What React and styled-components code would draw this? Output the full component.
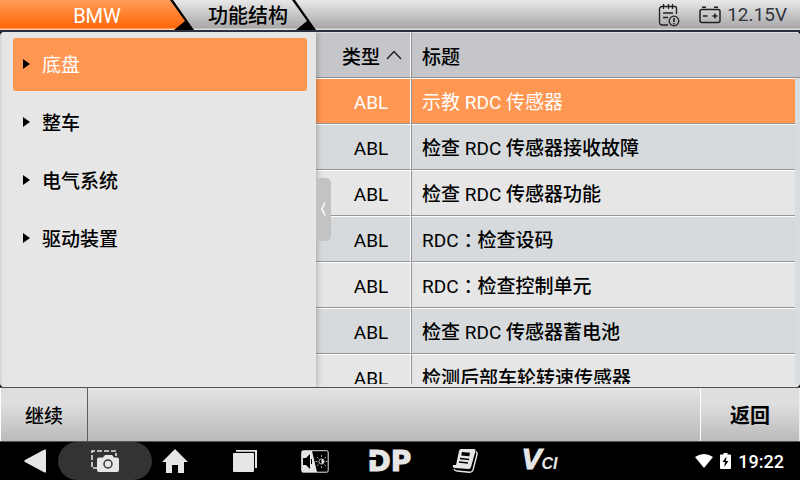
import React, { useState } from 'react';
import styled, { createGlobalStyle } from 'styled-components';

const GlobalStyle = createGlobalStyle`
    * {
        box-sizing: border-box;
    }
    body {
        margin: 0;
        background: #000;
        font-family: Roboto, 'Noto Sans CJK SC', sans-serif;
        font-size: 19px;
        color: #000;
    }
    button {
        border: none;
        padding: 0;
        background: none;
        font: inherit;
        color: inherit;
        cursor: pointer;
    }
`;

const Page = styled.div`
    height: 100vh;
    display: flex;
    flex-direction: column;
    overflow: hidden;
`;

const TopBar = styled.header`
    height: 32px;
    flex-shrink: 0;
    display: flex;
    background: linear-gradient(#e8e8e8, #a8a8a8 28px, #dcdcdc 29px, #dcdcdc 30px, #292e43 30px);
    border-bottom: 2px solid #292e43;
`;

const Tabs = styled.nav`
    display: flex;
`;

const Tab = styled.button`
    position: relative;
    z-index: 0;
    width: ${(props) => (props.$active ? '194px' : '122px')};
    padding-right: ${(props) => (props.$active ? '0' : '14px')};
    height: 30px;
    font-size: 20px;
    line-height: 32px;
    font-weight: ${(props) => (props.$active ? 400 : 500)};
    color: ${(props) => (props.$active ? '#fff' : '#000')};

    &::before,
    &::after {
        content: '';
        position: absolute;
        inset: 0;
        z-index: -1;
    }

    &::before {
        background: ${(props) => (props.$active ? 'linear-gradient(#ff9b58, #ff6808 28px, #ffc8a0 29px)' : 'none')};
        clip-path: polygon(0 0, calc(100% - 24px) 0, calc(100% - 8px) 21px, calc(100% - 19px) 100%, 0 100%);
    }

    &::after {
        background: #000;
        clip-path: polygon(calc(100% - 24px) 0, calc(100% - 21px) 0, 100% 100%, calc(100% - 20px) 100%, calc(100% - 9px) 21px);
    }
`;

const Status = styled.div`
    margin-left: auto;
    padding-right: 13px;
    display: flex;
    align-items: center;
    color: #32343f;
    line-height: 30px;

    svg {
        margin-right: 19px;
    }
    svg + svg {
        margin-right: 6px;
    }
`;

const Content = styled.main`
    flex: 1;
    min-height: 0;
    display: flex;
    background: #e6e6e6;
    border-left: 2px solid #d5dade;
    border-radius: 4px;
    overflow: hidden;
`;

const Side = styled.aside`
    width: 314px;
    flex-shrink: 0;
    padding: 6px 9px 0 11px;
    position: relative;
    z-index: 1;
    background: #e6e6e6;
    box-shadow: 1px 0 6px rgba(0, 0, 0, 0.25);
`;

const Tree = styled.ul`
    margin: 0;
    padding: 0;
    list-style: none;
    display: flex;
    flex-direction: column;
    gap: 5px;
`;

const TreeItem = styled.button`
    width: 100%;
    height: 53px;
    padding: 0 0 2px 10px;
    display: flex;
    align-items: center;
    gap: 12px;
    border-radius: 3px;
    font-weight: ${(props) => (props.$selected ? 400 : 500)};
    background: ${(props) => (props.$selected ? '#ff9752' : 'transparent')};
    color: ${(props) => (props.$selected ? '#fff' : '#000')};
`;

const Handle = styled.button`
    position: absolute;
    left: 100%;
    top: calc(50% - 32px);
    width: 15px;
    height: 63px;
    display: flex;
    align-items: center;
    justify-content: center;
    background: #c3c3c3;
    border-radius: 0 5px 5px 0;
`;

const TableBox = styled.div`
    flex: 1;
    min-width: 0;
    margin-bottom: 3px;
    overflow: hidden;
`;

const Table = styled.table`
    width: 100%;
    table-layout: fixed;
    border-collapse: separate;
    border-spacing: 0;
`;

const TypeCol = styled.col`
    width: 95px;
`;

const GutterCol = styled.col`
    width: 5px;
`;

const Th = styled.th`
    height: 46px;
    padding: ${(props) => (props.$type ? '0 8px 0 0' : '0 0 0 10px')};
    text-align: ${(props) => (props.$type ? 'right' : 'left')};
    font-weight: 500;
    background: #c5c6ca;
    border-top: 1px solid #dedede;
    border-bottom: 1px solid #8f8f91;
    border-right: ${(props) => (props.$type ? '1px solid #fff' : 'none')};
    border-left: ${(props) => (props.$type ? 'none' : '1px solid #909092')};
`;

const SortButton = styled.button`
    display: inline-flex;
    align-items: center;
    gap: 6px;
    vertical-align: middle;
`;

const Row = styled.tr`
    background: ${(props) => props.$color};
    color: ${(props) => (props.$selected ? '#fff' : '#000')};
    cursor: pointer;
`;

const Td = styled.td`
    height: 46px;
    padding: ${(props) => (props.$type ? '4px 0 0 16px' : '4px 0 0 10px')};
    text-align: ${(props) => (props.$type ? 'center' : 'left')};
    font-weight: ${(props) => (props.$selected || props.$type ? 400 : 500)};
    line-height: 22px;
    white-space: nowrap;
    border-top: 1px solid #fff;
    border-bottom: 1px solid #959698;
    border-right: ${(props) => (props.$type ? '1px solid #fff' : 'none')};
    border-left: ${(props) => (props.$type ? 'none' : '1px solid #909092')};
`;

const Latin = styled.span`
    font-weight: 400;
`;

const Colon = styled.span`
    display: inline-block;
    width: 19px;
    text-indent: 5px;
`;

const Gutter = styled.td`
    padding: 0;
    background: #d9dcdf;
`;

const Footer = styled.footer`
    height: 55px;
    flex-shrink: 0;
    display: flex;
    justify-content: space-between;
    background: linear-gradient(#e4e4e4, #b9b9b9);
    border-top: 1px solid #555;
    border-bottom: 1px solid #555;
`;

const FooterButton = styled.button`
    width: ${(props) => (props.$primary ? '100px' : '88px')};
    font-size: ${(props) => (props.$primary ? '20px' : '19px')};
    font-weight: ${(props) => (props.$primary ? 700 : 500)};
    background: linear-gradient(#dedede 30%, #bababa);
    border-left: 1px solid #fff;
    border-right: 1px solid ${(props) => (props.$primary ? '#eee' : '#5c5c5c')};
`;

const SystemBar = styled.nav`
    height: 38px;
    flex-shrink: 0;
    display: flex;
    align-items: center;
    background: #000;
    color: #e6e6e6;
`;

const NavButton = styled.button`
    position: relative;
    width: 70px;
    height: 38px;
    display: flex;
    align-items: center;
    justify-content: center;
`;

const Tools = styled.div`
    display: flex;
    margin-left: 2px;
`;

const ToolButton = styled(NavButton)`
    width: 75px;
`;

const CaptureButton = styled(NavButton)`
    width: 94px;
    margin: 0 -12px;
    background: #333;
    border-radius: 19px;
`;

const DpLogo = styled.span`
    font-family: 'DejaVu Sans', sans-serif;
    font-size: 28px;
    font-weight: 700;
    line-height: 38px;
    padding-top: 1px;
    -webkit-text-stroke: 1px #e6e6e6;

    &::before {
        content: '';
        position: absolute;
        left: 16px;
        top: 15px;
        width: 14px;
        height: 3px;
        background: #000;
    }
`;

const VciLogo = styled.span`
    font-family: 'Liberation Sans', sans-serif;
    font-size: 30px;
    font-weight: 700;
    font-style: italic;
    line-height: 40px;
    -webkit-text-stroke: 1px #e6e6e6;

    small {
        font-size: 16px;
        -webkit-text-stroke: 0;
    }
`;

const Clock = styled.div`
    margin-left: auto;
    padding-right: 16px;
    display: flex;
    align-items: center;
    gap: 7px;
    font-size: 18px;
    font-weight: 500;
    color: #fff;
`;

const treeItems = ['底盘', '整车', '电气系统', '驱动装置'];

const rows = [
    '示教 RDC 传感器',
    '检查 RDC 传感器接收故障',
    '检查 RDC 传感器功能',
    'RDC：检查设码',
    'RDC：检查控制单元',
    '检查 RDC 传感器蓄电池',
    '检测后部车轮转速传感器',
];

const rowColor = (index, selected) => {
    if (index === selected) return '#ff9752';
    return index % 2 ? '#d6dadd' : '#e6e6e6';
};

const ReportIcon = () => (
    <svg width="22" height="24" viewBox="0 0 22 24" fill="none" stroke="#202020" strokeWidth="1.3">
        <path d="M10 22H4a2.500 2.500 0 0 1-2.500-2.500V6A2.500 2.500 0 0 1 4 3.500h13A1.500 1.500 0 0 1 18.500 5v6M5.500 1v5M10.500 1v5M14.500 1v5M5 10h10M5 14.500h5" />
        <circle cx="16" cy="18" r="4.800" />
        <path d="M16 15v4M16 20v1.500" strokeWidth="1.600" />
    </svg>
);

const BatteryIcon = () => (
    <svg width="22" height="18" viewBox="0 0 22 18" fill="none" stroke="#202020" strokeWidth="1.500">
        <rect x="1" y="3.500" width="20" height="13" rx="2" />
        <path d="M3 1.200h4M15 1.200h4M4 10h4.500M13.500 10h5M16 7.500v5" />
    </svg>
);

const BackIcon = () => (
    <svg width="22" height="24" viewBox="0 0 22 24" fill="currentColor">
        <path d="M20.500 0.500Q22 0 22 1.500v21q0 1.500-1.500 1L1 13q-1.500-1 0-2z" />
    </svg>
);

const CaptureIcon = () => (
    <svg width="28" height="23" viewBox="0 0 28 23">
        <path d="M7 18H1V1h24v5" fill="none" stroke="#e6e6e6" strokeWidth="1.600" strokeDasharray="5 2" />
        <path d="M8 7.500h4l2-2.500h7l2 2.500h3q2 0 2 2V20q0 2-2 2H8q-2 0-2-2V9.500q0-2 2-2z" fill="#e6e6e6" />
        <circle cx="17" cy="14" r="4" fill="none" stroke="#333" strokeWidth="1.500" />
    </svg>
);

const HomeIcon = () => (
    <svg width="26" height="25" viewBox="0 0 26 25" fill="currentColor">
        <path d="M13 0L26 13h-4v11h-6v-8h-6v8H4V13H0z" />
    </svg>
);

const RecentIcon = () => (
    <svg width="25" height="23" viewBox="0 0 25 23" fill="currentColor">
        <rect y="3" width="21" height="19" rx="1" />
        <path d="M3 0h21v18h-2V1.800H3z" />
    </svg>
);

const SoundLightIcon = () => (
    <svg width="28" height="23" viewBox="0 0 28 23">
        <rect x="0.700" y="0.700" width="26.500" height="21.500" rx="1.500" fill="#000" stroke="#e6e6e6" />
        <path d="M1 1h10l5 21H1z" fill="#e6e6e6" />
        <path d="M2 8h3l4-4v15l-4-4H2z" fill="#000" />
        <path d="M10.500 9v5" stroke="#000" />
        <circle cx="20.500" cy="11.500" r="2.600" fill="none" stroke="#e6e6e6" strokeWidth="0.800" />
        <path d="M20.500 9a2.500 2.500 0 0 1 0 5z" fill="#e6e6e6" />
        <path d="M20.500 5v2M20.500 16v2M14.500 11.500h2M24.500 11.500h2M16 7l1.500 1.500M25 7l-1.500 1.500M16 16l1.500-1.500M25 16l-1.500-1.500" stroke="#e6e6e6" strokeWidth="0.700" />
    </svg>
);

const BookIcon = () => (
    <svg width="26" height="26" viewBox="0 0 26 26">
        <path d="M9 1h13q2 0 1.500 2L19 19q-.5 2-2.500 2L3 20q-3-.5-2-3h3L7 3q.5-2 2-2z" fill="#e6e6e6" />
        <path d="M24 3.500q1.500 1 1 3L21 22q-1 2.500-3.500 2.300L5 23q-2 0-3-2" fill="none" stroke="#e6e6e6" strokeWidth="1.400" />
        <path d="M10 4l8 .7-.8 3.500-8-.7z" fill="#000" />
        <path d="M8 10.500l9 .9M7 14l9 .9" stroke="#000" strokeWidth="1.500" />
    </svg>
);

const WifiIcon = () => (
    <svg width="18" height="14" viewBox="0 0 18 14" fill="currentColor">
        <path d="M0 3Q9-3 18 3L9 14z" />
    </svg>
);

const ChargeIcon = () => (
    <svg width="11" height="16" viewBox="0 0 11 16">
        <path d="M3.500 0h4v1.500H10q1 0 1 1V15q0 1-1 1H1q-1 0-1-1V2.500q0-1 1-1h2.500z" fill="#fff" />
        <path d="M6.500 3.500L2.500 9H5l-.8 5L8.500 8H6z" fill="#000" />
    </svg>
);

const Title = ({ text }) =>
    text.split(/(RDC|：)/).map((part, i) => {
        if (part === 'RDC') return <Latin key={i}>{part}</Latin>;
        if (part === '：') return <Colon key={i}>{part}</Colon>;
        return part;
    });

const App = () => {
    const [group, setGroup] = useState(0);
    const [selected, setSelected] = useState(0);

    return (
        <Page>
            <GlobalStyle />
            <TopBar>
                <Tabs>
                    <Tab $active>BMW</Tab>
                    <Tab>功能结构</Tab>
                </Tabs>
                <Status>
                    <ReportIcon />
                    <BatteryIcon />
                    <span>12.15V</span>
                </Status>
            </TopBar>
            <Content>
                <Side>
                    <Tree>
                        {treeItems.map((name, i) => (
                            <li key={name}>
                                <TreeItem $selected={i === group} onClick={() => setGroup(i)}>
                                    <svg width="7" height="10" viewBox="0 0 7 10">
                                        <path d="M0 0l7 5-7 5z" fill="#000" />
                                    </svg>
                                    {name}
                                </TreeItem>
                            </li>
                        ))}
                    </Tree>
                    <Handle aria-label="收起">
                        <svg width="5" height="14" viewBox="0 0 5 14" fill="none" stroke="#fff" strokeWidth="1.500">
                            <path d="M4 0.500L1 7l3 6.500" />
                        </svg>
                    </Handle>
                </Side>
                <TableBox>
                    <Table>
                        <colgroup>
                            <TypeCol />
                            <col />
                            <GutterCol />
                        </colgroup>
                        <thead>
                            <tr>
                                <Th $type>
                                    <SortButton>
                                        类型
                                        <svg width="16" height="10" viewBox="0 0 16 10" fill="none" stroke="#222" strokeWidth="1.500">
                                            <path d="M1 9l7-7.500L15 9" />
                                        </svg>
                                    </SortButton>
                                </Th>
                                <Th colSpan={2}>标题</Th>
                            </tr>
                        </thead>
                        <tbody>
                            {rows.map((text, i) => (
                                <Row key={text} $color={rowColor(i, selected)} $selected={i === selected} onClick={() => setSelected(i)}>
                                    <Td $type>ABL</Td>
                                    <Td $selected={i === selected}>
                                        <Title text={text} />
                                    </Td>
                                    <Gutter />
                                </Row>
                            ))}
                        </tbody>
                    </Table>
                </TableBox>
            </Content>
            <Footer>
                <FooterButton>继续</FooterButton>
                <FooterButton $primary>返回</FooterButton>
            </Footer>
            <SystemBar>
                <NavButton aria-label="后退"><BackIcon /></NavButton>
                <CaptureButton aria-label="截屏"><CaptureIcon /></CaptureButton>
                <NavButton aria-label="主页"><HomeIcon /></NavButton>
                <NavButton aria-label="最近任务"><RecentIcon /></NavButton>
                <NavButton aria-label="声音与亮度"><SoundLightIcon /></NavButton>
                <Tools>
                    <ToolButton><DpLogo>DP</DpLogo></ToolButton>
                    <ToolButton aria-label="手册"><BookIcon /></ToolButton>
                    <ToolButton><VciLogo>V<small>CI</small></VciLogo></ToolButton>
                </Tools>
                <Clock>
                    <WifiIcon />
                    <ChargeIcon />
                    <span>19:22</span>
                </Clock>
            </SystemBar>
        </Page>
    );
};

export default App;
